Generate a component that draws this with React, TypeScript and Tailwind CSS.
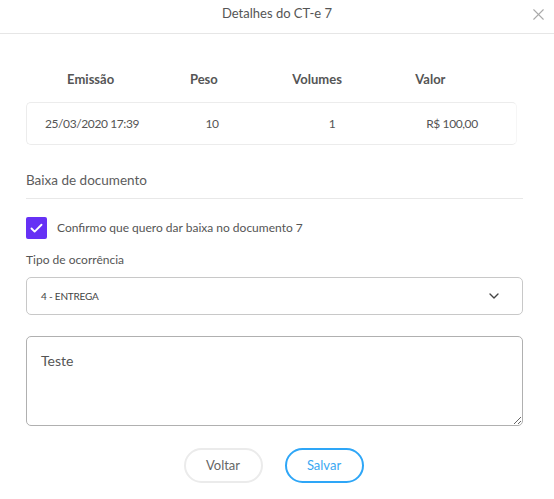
import { Check, ChevronDown, X } from 'lucide-react';

const headers = ['Emissão', 'Peso', 'Volumes', 'Valor'];
const values = ['25/03/2020 17:39', '10', '1', 'R$ 100,00'];

export default function App() {
  return (
    <div
      className="w-[554px] h-[499px] bg-white text-[#555] overflow-hidden"
      style={{ fontFamily: 'Lato, "Noto Sans", sans-serif' }}
    >
      {/* Header */}
      <header className="relative h-[34px] border-b border-[#e6e6e6] flex items-center justify-center">
        <h1 className="text-[13px] text-[#555] leading-none -mt-[7px]">Detalhes do CT-e 7</h1>
        <button className="absolute right-[6px] top-[5px] text-[#aaa]">
          <X size={19} strokeWidth={1.4} />
        </button>
      </header>

      <div className="pl-[26px] pr-[31px]">
        {/* Table */}
        <div className="grid grid-cols-4 pl-[8px] pr-[36px] mt-[36px] h-[20px] items-center">
          {headers.map((h) => (
            <div key={h} className="text-center text-[13px] font-bold text-[#555]">
              {h}
            </div>
          ))}
        </div>
        <div className="mt-[12px] mr-[6px] h-[43px] border border-[#ececec] border-r-[#f6f6f6] rounded-[5px] grid grid-cols-4 items-center pl-[5px] pr-[4px] text-[12px] tracking-[-0.4px] text-[#555]">
          {values.map((v) => (
            <div key={v} className="text-center">
              {v}
            </div>
          ))}
        </div>

        {/* Baixa */}
        <div className="mt-[26px] text-[13.5px] text-[#5c5c5c] leading-[18px]">Baixa de documento</div>
        <div className="mt-[9px] border-b border-[#e8e8e8]" />

        <label className="mt-[18px] flex items-center gap-[10px]">
          <span className="w-[21px] h-[22px] rounded-[2px] bg-[#6631f5] flex items-center justify-center text-white">
            <Check size={15} strokeWidth={3} />
          </span>
          <span className="text-[12px] text-[#555]">Confirmo que quero dar baixa no documento 7</span>
        </label>

        <div className="mt-[12px] text-[12px] text-[#555] leading-[18px]">Tipo de ocorrência</div>
        <div className="mt-[8px] h-[38px] border border-[#c8c8c8] rounded-[5px] flex items-center justify-between pl-[14px] pr-[20px]">
          <span className="text-[10px] tracking-[-0.2px] text-[#444] uppercase">4 - ENTREGA</span>
          <ChevronDown size={16} strokeWidth={2} className="text-[#444]" />
        </div>

        <textarea
          className="mt-[21px] block w-full h-[90px] border border-[#b0b0b0] rounded-[5px] px-[14px] py-[13px] text-[14px] text-[#555] outline-none resize-y"
          defaultValue="Teste"
        />

        <div className="mt-[22px] flex justify-center gap-[22px] pr-[2px]">
          <button className="w-[79px] h-[35px] rounded-full border-2 border-[#ebebeb] text-[13px] text-[#666]">
            Voltar
          </button>
          <button className="w-[79px] h-[35px] rounded-full border-2 border-[#2ea6f7] text-[13px] text-[#3aa8f2]">
            Salvar
          </button>
        </div>
      </div>
    </div>
  );
}
